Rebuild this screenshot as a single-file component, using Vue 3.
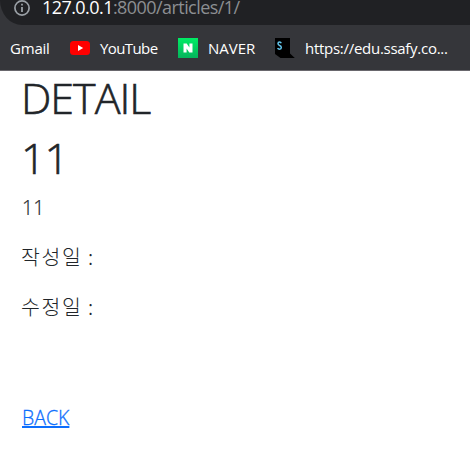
<script setup>
const fields = ['작성일 :', '수정일 :']
</script>

<template>
  <div class="window">
    <header class="chrome">
      <div class="address">
        <svg class="info" viewBox="0 0 18 18" width="18" height="18">
          <circle cx="9" cy="9" r="7.1" fill="none" stroke="#9aa0a6" stroke-width="1.7" />
          <path d="M9 8v5M9 4.8v1.8" stroke="#9aa0a6" stroke-width="1.8" />
        </svg>
        <span class="url"><b>127.0.0.1</b>:8000/articles/1/</span>
      </div>
      <nav class="bookmarks">
        <span class="mark gmail">Gmail</span>
        <span class="mark youtube">
          <svg viewBox="0 0 20 20" width="20" height="20">
            <rect x="0" y="3" width="20" height="14" rx="3.5" fill="#f00" />
            <path d="M8 7l5.2 3L8 13z" fill="#fff" />
          </svg>
          <span>YouTube</span>
        </span>
        <span class="mark naver">
          <svg viewBox="0 0 20 20" width="20" height="20">
            <defs>
              <linearGradient id="green" x1="0" y1="0" x2="0" y2="1">
                <stop offset="0" stop-color="#00ec64" />
                <stop offset="1" stop-color="#05b45c" />
              </linearGradient>
            </defs>
            <rect width="20" height="20" fill="url(#green)" />
            <path d="M5.5 5.5h3.2l2.7 4v-4h3.1v9h-3.2l-2.7-4v4H5.5z" fill="#fff" />
          </svg>
          <span>NAVER</span>
        </span>
        <span class="mark ssafy">
          <svg viewBox="0 0 20 20" width="20" height="20">
            <path d="M0 0h15v15.5l4.8 4.5H5.5L0 16z" fill="#000" />
            <path d="M6.2 5.3Q5.8 4 4.6 4Q3 4 3 5.6Q3 6.9 4.6 7.5Q6.3 8.1 6.3 9.6Q6.3 11.3 4.6 11.3Q3.1 11.3 2.7 10" fill="none" stroke="#63c7ee" stroke-width="1.5" />
          </svg>
          <span>https://edu.ssafy.co...</span>
        </span>
      </nav>
    </header>
    <main class="page">
      <h1 class="title">DETAIL</h1>
      <h1 class="number">11</h1>
      <p class="content">11</p>
      <p v-for="f in fields" :key="f" class="field">{{ f }}</p>
      <a class="back">BACK</a>
    </main>
  </div>
</template>

<style>
body {
  background: #fff;
}
</style>

<style scoped>
.window {
  height: 455px;
  overflow: hidden;
  font-family: "Open Sans", "Noto Sans", "Noto Sans CJK KR", sans-serif;
}
.chrome {
  box-sizing: border-box;
  height: 71px;
  background: #35363a;
  border-bottom: 1px solid #69676d;
}
.address {
  display: flex;
  box-sizing: border-box;
  height: 25px;
  padding-left: 13px;
  background: #202124;
  border-bottom-left-radius: 22px 25px;
}
.info {
  flex: none;
  margin-top: -1px;
}
.url {
  margin: -5px 0 0 11px;
  font-size: 18px;
  line-height: 25px;
  letter-spacing: -0.56px;
  color: #8c8f92;
  white-space: nowrap;
}
.url b {
  font-weight: 400;
  color: #fff;
}
.bookmarks {
  display: flex;
  align-items: center;
  height: 45px;
  padding: 1px 0 0 10px;
  box-sizing: border-box;
  font-size: 15px;
  line-height: 20px;
  color: #fff;
  white-space: nowrap;
}
.mark {
  display: flex;
  flex: none;
  gap: 10px;
  height: 20px;
}
.gmail {
  width: 60px;
  letter-spacing: -0.2px;
}
.youtube {
  width: 108px;
  letter-spacing: -0.6px;
}
.naver {
  width: 97px;
}
.ssafy {
  letter-spacing: -0.28px;
}
.page {
  padding: 2px 22px 0;
  color: #212529;
}
.title,
.number {
  margin: 0 0 10px -1px;
  font-size: 43px;
  font-weight: 300;
  line-height: 50px;
  letter-spacing: -1px;
  -webkit-text-stroke: 0.6px #212529;
}
.content,
.field {
  margin: 0 0 20px;
  font-size: 19.5px;
  font-weight: 300;
  line-height: 30px;
  -webkit-text-stroke: 0.2px #212529;
}
.content {
  margin-bottom: 18px;
}
.field {
  margin-left: -1px;
  font-family: "Noto Sans CJK KR", sans-serif;
  font-size: 20.5px;
  letter-spacing: 1.7px;
  word-spacing: -1px;
  -webkit-text-stroke: 0;
}
.back {
  display: inline-block;
  margin-top: 62px;
  font-size: 19.5px;
  font-weight: 300;
  line-height: 30px;
  color: #0d6efd;
  -webkit-text-stroke: 0.3px #0d6efd;
  text-decoration: underline;
  text-decoration-thickness: 2px;
  text-underline-offset: 1px;
}
</style>
